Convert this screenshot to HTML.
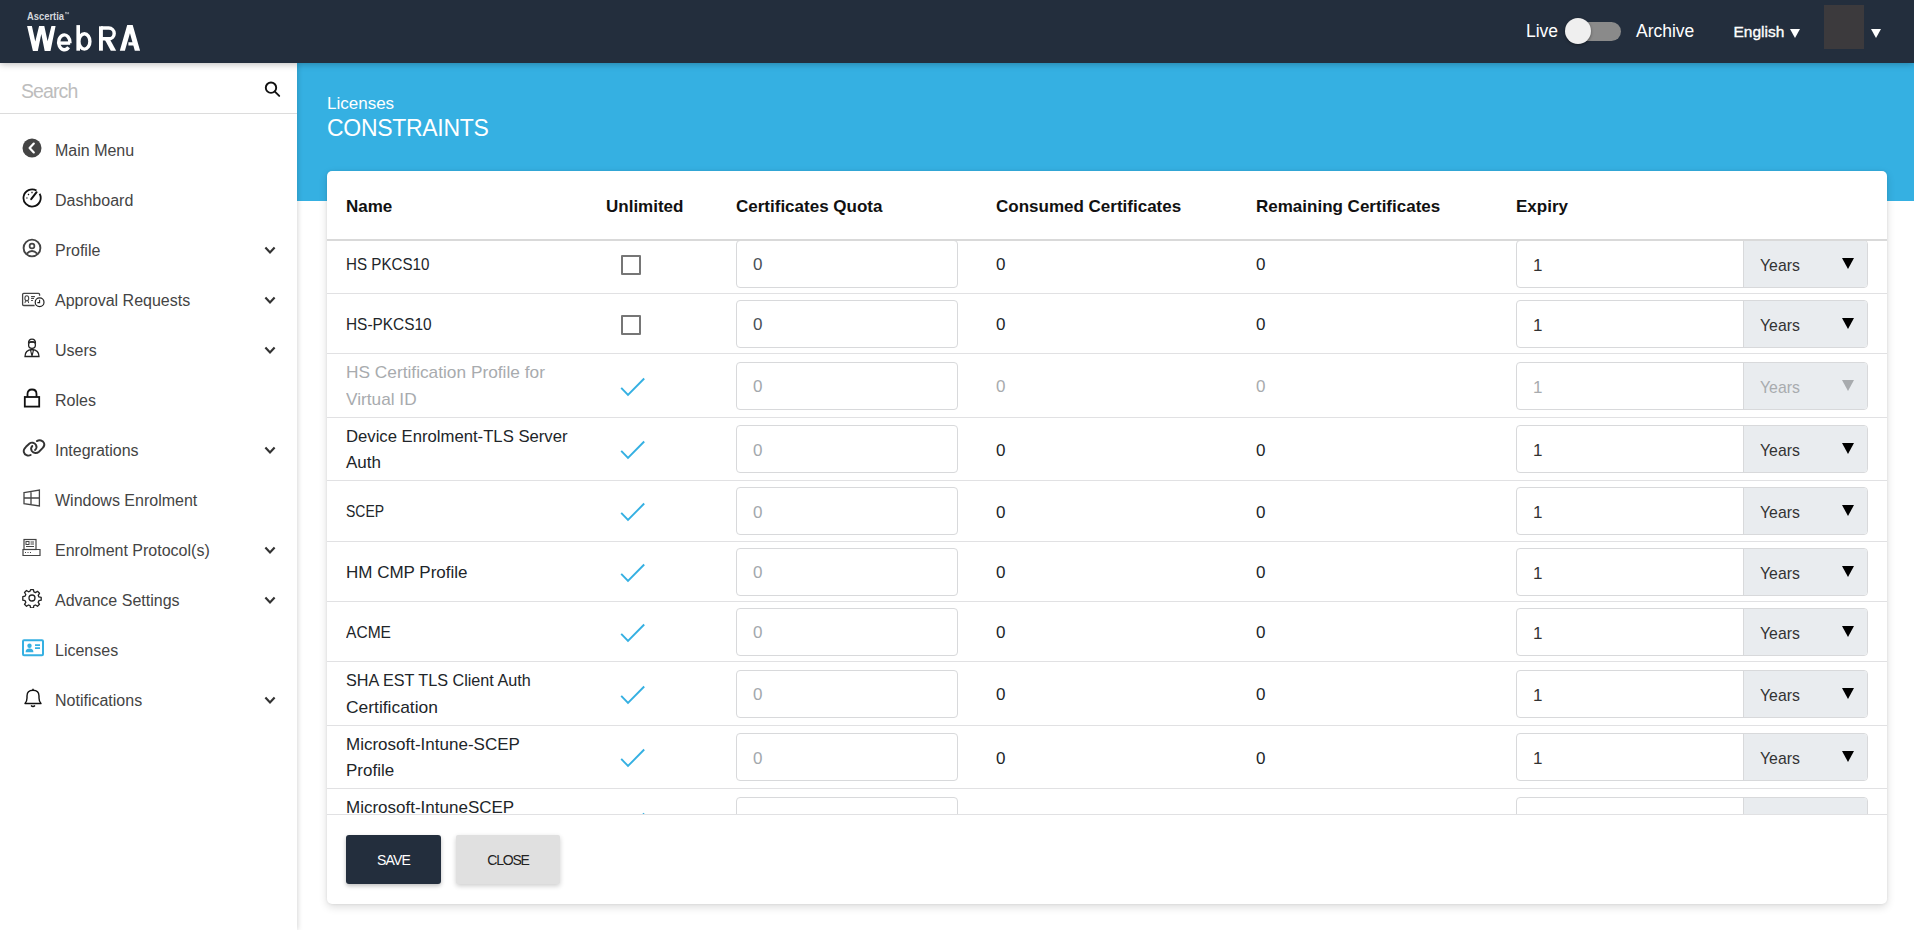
<!DOCTYPE html>
<html><head><meta charset="utf-8">
<style>
*{box-sizing:border-box;margin:0;padding:0}
html,body{width:1914px;height:930px;overflow:hidden;background:#fff;font-family:"Liberation Sans",sans-serif}
.abs{position:absolute}
#hdr{position:absolute;left:0;top:0;width:1914px;height:63px;background:#232e3d;z-index:5;box-shadow:0 1px 7px rgba(0,0,0,.28)}
#side{position:absolute;left:0;top:63px;width:297px;height:867px;background:#fff;z-index:4;box-shadow:0 0 0 0 #fff,1px 0 5px rgba(0,0,0,.16)}
#banner{position:absolute;left:297px;top:63px;width:1617px;height:138px;background:#35b0e2}
.mi{position:absolute;left:0;width:297px;height:50px;font-size:16px;color:#444}
.mi .t{position:absolute;left:55px;top:0;line-height:20px}
.mi svg{position:absolute}
.chev{position:absolute;left:263px}
#card{position:absolute;left:327px;top:171px;width:1560px;height:733px;background:#fff;border-radius:5px;box-shadow:0 3px 8px rgba(0,0,0,.14),0 0 3px rgba(0,0,0,.08)}
.th{position:absolute;top:197px;font-size:17px;font-weight:bold;color:#111;line-height:20px}
.row{position:absolute;left:327px;width:1560px;border-bottom:1px solid #e1e1e3}
.nm{position:absolute;left:19px;font-size:17px;color:#212529;line-height:26.8px}
.inp{position:absolute;left:409px;width:222px;height:48px;border:1px solid #d8d9db;border-radius:4px;background:#fff}
.inp span{position:absolute;left:16px;top:14.5px;font-size:17px;color:#9aa0a6;line-height:20px}
.val{position:absolute;font-size:17px;color:#212529;line-height:20px}
.exp{position:absolute;left:1189px;width:352px;height:48px;border:1px solid #d8d9db;border-radius:4px;background:#fff;overflow:hidden}
.exp .one{position:absolute;left:16px;top:15px;font-size:17px;color:#333;line-height:20px}
.exp .sel{position:absolute;left:226px;top:0;width:126px;height:46px;background:#e9ecef;border-left:1px solid #d8d9db}
.exp .sel span{position:absolute;left:16px;top:15px;font-size:17px;color:#333;line-height:20px;transform:scaleX(0.93);transform-origin:0 0}
.exp .sel i{position:absolute;left:98px;top:17px;width:0;height:0;border-left:6px solid transparent;border-right:6px solid transparent;border-top:11px solid #000}
.cb{position:absolute;left:294px;width:20px;height:20px;border:2px solid #767676;border-radius:1px}
.ck{position:absolute;left:293px}
.dis .nm,.dis .val,.dis .exp .one,.dis .exp .sel span{color:#a8abae}
.dis .exp .sel i{border-top-color:#a8abae}
</style></head><body>

<div id="hdr">
  <svg class="abs" style="left:0;top:0" width="160" height="63" viewBox="0 0 160 63">
  <text x="27" y="19.6" font-family="Liberation Sans" font-weight="bold" font-size="10.2" fill="#d4d7dc" textLength="37" lengthAdjust="spacingAndGlyphs">Ascertia</text>
  <path d="M65 12.4h1.6M65.8 12.4v1.8M67 14.2v-1.8l.8 1 .8-1v1.8" stroke="#ddd" stroke-width="0.6" fill="none"/>
  <g fill="#fff">
    <path d="M27.1 26 L31.9 26 L35.3 41.6 L39.1 26 L44.3 26 L47.6 41.3 L51.4 26 L55.6 26 L50.5 50.9 L44.7 50.9 L41.3 33.9 L37.8 50.9 L32.9 50.9 Z"/>
    <rect x="76.4" y="25.1" width="3.6" height="25.6"/>
    <polygon points="99,26.3 102.9,26.3 102.9,50.7 99,50.7"/>
    <polygon points="104.3,38.8 109.6,38.8 116.2,50.7 110.8,50.7"/>
    <polygon points="119.8,50.7 127.2,25.1 132.7,25.1 140.1,50.7 134.8,50.7 129.95,33.2 124.9,50.7"/>
    <polygon points="128.4,42.3 133.5,42.3 134.3,45.5 128.4,45.5"/>
  </g>
  <g fill="none" stroke="#fff" stroke-width="3.4">
    <path d="M58.4 43.1 H70.2"/>
    <path d="M70 43.1 A5.7 7.45 0 1 0 68.6 47.3"/>
    <ellipse cx="84.4" cy="41.4" rx="5.5" ry="7.7"/>
    <path d="M101 28 H108.8 A5.4 5.4 0 0 1 108.8 38.8 H101"/>
  </g>
</svg>
  <div class="abs" style="left:1526px;top:21px;font-size:17.5px;color:#fff;line-height:20px">Live</div>
  <div class="abs" style="left:1566px;top:22px;width:55px;height:19px;border-radius:10px;background:#8a8a8a"></div>
  <div class="abs" style="left:1565px;top:18px;width:26px;height:26px;border-radius:50%;background:#efefef;box-shadow:0 1px 3px rgba(0,0,0,.4)"></div>
  <div class="abs" style="left:1636px;top:21px;font-size:17.5px;color:#fff;line-height:20px">Archive</div>
  <div class="abs" style="left:1733.5px;top:21.5px;font-size:15.5px;color:#fff;line-height:20px;-webkit-text-stroke:0.35px #fff">English</div>
  <div class="abs" style="left:1790px;top:29px;width:0;height:0;border-left:5px solid transparent;border-right:5px solid transparent;border-top:9px solid #fff"></div>
  <div class="abs" style="left:1824px;top:5px;width:40px;height:44px;background:#3c3a3d"></div>
  <div class="abs" style="left:1871px;top:29px;width:0;height:0;border-left:5px solid transparent;border-right:5px solid transparent;border-top:9px solid #fff"></div>
</div>

<div id="side">
  <div class="abs" style="left:21px;top:18px;font-size:19.5px;color:#bdbdbd;line-height:20px;letter-spacing:-0.9px">Search</div>
  <svg class="abs" style="left:263px;top:18px" width="20" height="20" viewBox="0 0 20 20"><circle cx="8" cy="6.7" r="5.2" fill="none" stroke="#111" stroke-width="1.9"/><line x1="11.9" y1="10.6" x2="16.2" y2="14.9" stroke="#111" stroke-width="1.9" stroke-linecap="round"/></svg>
  <div class="abs" style="left:0;top:50px;width:297px;height:1px;background:#dcdcdc"></div>
<div class="mi" style="top:63px"><div class="ib" style="position:absolute;left:22px;top:12px;width:24px;height:20px"><svg width="20" height="20" viewBox="0 0 20 20"><circle cx="10" cy="10" r="9.5" fill="#444"/><path d="M11.8 5.6 L7.6 10 L11.8 14.4" fill="none" stroke="#fff" stroke-width="2.2" stroke-linecap="round" stroke-linejoin="round"/></svg></div><span class="t" style="top:15px">Main Menu</span></div>
<div class="mi" style="top:113px"><div class="ib" style="position:absolute;left:22px;top:12px;width:24px;height:20px"><svg width="20" height="20" viewBox="0 0 20 20"><path d="M14.5 2.6 A8.6 8.6 0 1 0 17.6 5.8" fill="none" stroke="#111" stroke-width="1.8"/><path d="M9.2 11.2 L14.6 4.2" stroke="#111" stroke-width="2" stroke-linecap="round"/><path d="M4.2 10 h1.4 M6 6 l1 1 M10 3.8 v1.4" stroke="#111" stroke-width="1.2"/></svg></div><span class="t" style="top:15px">Dashboard</span></div>
<div class="mi" style="top:163px"><div class="ib" style="position:absolute;left:22px;top:12px;width:24px;height:20px"><svg width="20" height="20" viewBox="0 0 20 20"><circle cx="10" cy="10" r="8.4" fill="none" stroke="#444" stroke-width="1.9"/><circle cx="10" cy="8" r="2.4" fill="none" stroke="#444" stroke-width="1.7"/><path d="M4.8 15.6 Q10 10.4 15.2 15.6" fill="none" stroke="#444" stroke-width="1.9"/></svg></div><span class="t" style="top:15px">Profile</span><svg class="chev" style="top:19.8px;left:263.5px" width="13" height="9" viewBox="0 0 13 9"><path d="M1.4 1.6 L6 6.4 L10.6 1.6" fill="none" stroke="#333" stroke-width="2.2"/></svg></div>
<div class="mi" style="top:213px"><div class="ib" style="position:absolute;left:22px;top:12px;width:24px;height:20px"><svg width="26" height="22" viewBox="0 -1.1 26 22" style="overflow:visible"><path d="M17.6 6.6 V5.3 Q17.6 4.2 16.5 4.2 H1.7 Q0.6 4.2 0.6 5.3 V15.3 Q0.6 16.4 1.7 16.4 H12.6" fill="none" stroke="#444" stroke-width="1.3"/><ellipse cx="4.8" cy="9.2" rx="1.9" ry="2.6" fill="none" stroke="#444" stroke-width="1.1"/><path d="M3.6 11.5 L2.9 14 M6 11.5 L6.7 14" stroke="#444" stroke-width="1"/><path d="M9.1 7.5h3.8 M9.1 9.4h2.9 M9.1 11.4h1.8" stroke="#444" stroke-width="1.1"/><circle cx="17.6" cy="13.2" r="4.4" fill="#fff" stroke="#222" stroke-width="1.2"/><path d="M17.6 10.7v2.8h-2.2" fill="none" stroke="#222" stroke-width="1.1"/></svg></div><span class="t" style="top:15px">Approval Requests</span><svg class="chev" style="top:19.8px;left:263.5px" width="13" height="9" viewBox="0 0 13 9"><path d="M1.4 1.6 L6 6.4 L10.6 1.6" fill="none" stroke="#333" stroke-width="2.2"/></svg></div>
<div class="mi" style="top:263px"><div class="ib" style="position:absolute;left:22px;top:12px;width:24px;height:20px"><svg width="20" height="20" viewBox="0 0 20 20"><path d="M6.5 5.5 Q6.5 1.2 10 1.2 Q13.5 1.2 13.5 5.5" fill="none" stroke="#222" stroke-width="1.3"/><path d="M6.2 4.2 h7.6" stroke="#222" stroke-width="1.3"/><circle cx="10" cy="7" r="3.4" fill="none" stroke="#222" stroke-width="1.3"/><path d="M3 18.5 Q3 12 10 11.5 Q17 12 17 18.5 Z" fill="none" stroke="#222" stroke-width="1.3"/><path d="M8.5 12 L10 18 L11.5 12" fill="none" stroke="#222" stroke-width="1.1"/></svg></div><span class="t" style="top:15px">Users</span><svg class="chev" style="top:19.8px;left:263.5px" width="13" height="9" viewBox="0 0 13 9"><path d="M1.4 1.6 L6 6.4 L10.6 1.6" fill="none" stroke="#333" stroke-width="2.2"/></svg></div>
<div class="mi" style="top:313px"><div class="ib" style="position:absolute;left:22px;top:12px;width:24px;height:20px"><svg width="20" height="20" viewBox="0 0 20 20"><path d="M5.5 9 V6 Q5.5 1.5 10 1.5 Q14.5 1.5 14.5 6 V9" fill="none" stroke="#111" stroke-width="1.8"/><rect x="2.8" y="9" width="14.4" height="9.6" fill="none" stroke="#111" stroke-width="1.8"/></svg></div><span class="t" style="top:15px">Roles</span></div>
<div class="mi" style="top:363px"><div class="ib" style="position:absolute;left:22px;top:12px;width:24px;height:20px"><svg width="24" height="20" viewBox="0 -1.5 24 20" style="overflow:visible"><path d="M8.7 15.5 C6 17 2.5 15.5 1.8 12.5 C1.3 10.5 2.5 8.8 4 7.3 L7.5 4 C9.5 2.5 12.5 3 14 5.5 C15 7.5 14.2 9.5 13 10.5" fill="none" stroke="#333" stroke-width="1.9" stroke-linecap="round"/><path d="M14.9 1.6 C17.5 0 21 1 22 3.5 C22.8 5.5 22 7.2 20.8 8.4 L17 12.2 C15 14 11.5 14 9.8 11.5 C8.8 9.8 9 7.8 10.3 6.5" fill="none" stroke="#333" stroke-width="1.9" stroke-linecap="round"/></svg></div><span class="t" style="top:15px">Integrations</span><svg class="chev" style="top:19.8px;left:263.5px" width="13" height="9" viewBox="0 0 13 9"><path d="M1.4 1.6 L6 6.4 L10.6 1.6" fill="none" stroke="#333" stroke-width="2.2"/></svg></div>
<div class="mi" style="top:413px"><div class="ib" style="position:absolute;left:22px;top:12px;width:24px;height:20px"><svg width="20" height="20" viewBox="0 0 20 20"><path d="M2 4.6 L17.4 2 V18 L2 15.6 Z M2 10 H17.4 M9 3.4 V16.8" fill="none" stroke="#444" stroke-width="1.3"/></svg></div><span class="t" style="top:15px">Windows Enrolment</span></div>
<div class="mi" style="top:463px"><div class="ib" style="position:absolute;left:22px;top:12px;width:24px;height:20px"><svg width="20" height="20" viewBox="0 0 20 20"><rect x="2" y="1.5" width="12" height="10" fill="none" stroke="#444" stroke-width="1.2"/><rect x="4" y="3.5" width="3" height="3" fill="none" stroke="#444" stroke-width="1"/><path d="M8.5 4h3.5 M8.5 6h3.5 M4 8.5h8" stroke="#444" stroke-width="1"/><path d="M1 11.5 H18 V17.5 H1 Z" fill="none" stroke="#444" stroke-width="1.2"/><path d="M3 14.5h1 M5.5 14.5h1 M8 14.5h1" stroke="#444" stroke-width="1.2"/></svg></div><span class="t" style="top:15px">Enrolment Protocol(s)</span><svg class="chev" style="top:19.8px;left:263.5px" width="13" height="9" viewBox="0 0 13 9"><path d="M1.4 1.6 L6 6.4 L10.6 1.6" fill="none" stroke="#333" stroke-width="2.2"/></svg></div>
<div class="mi" style="top:513px"><div class="ib" style="position:absolute;left:22px;top:12px;width:24px;height:20px"><svg width="20" height="20" viewBox="0 0 20 20"><path d="M8.6 1.6h2.8l.5 2.3 1.6.7 2-1.3 2 2-1.3 2 .7 1.6 2.3.5v2.8l-2.3.5-.7 1.6 1.3 2-2 2-2-1.3-1.6.7-.5 2.3H8.6l-.5-2.3-1.6-.7-2 1.3-2-2 1.3-2-.7-1.6-2.3-.5V8.6l2.3-.5.7-1.6-1.3-2 2-2 2 1.3 1.6-.7z" fill="none" stroke="#222" stroke-width="1.3" stroke-linejoin="round"/><circle cx="10" cy="10" r="3" fill="none" stroke="#222" stroke-width="1.3"/></svg></div><span class="t" style="top:15px">Advance Settings</span><svg class="chev" style="top:19.8px;left:263.5px" width="13" height="9" viewBox="0 0 13 9"><path d="M1.4 1.6 L6 6.4 L10.6 1.6" fill="none" stroke="#333" stroke-width="2.2"/></svg></div>
<div class="mi" style="top:563px" style="color:#35b0e2"><div class="ib" style="position:absolute;left:22px;top:12px;width:24px;height:20px"><svg width="22" height="18" viewBox="0 -1.2 22 18" style="overflow:visible"><rect x="1" y="1" width="20" height="15" rx="1" fill="none" stroke="#35b0e2" stroke-width="2"/><circle cx="7.5" cy="6.5" r="2.2" fill="#35b0e2"/><path d="M3.6 13 Q3.6 9.4 7.5 9.4 Q11.4 9.4 11.4 13 Z" fill="#35b0e2"/><path d="M13 6h5 M13 9h5" stroke="#35b0e2" stroke-width="1.8"/></svg></div><span class="t" style="top:15px">Licenses</span></div>
<div class="mi" style="top:613px"><div class="ib" style="position:absolute;left:22px;top:12px;width:24px;height:20px"><svg width="22" height="20" viewBox="0 0 22 20"><path d="M3 15.5 Q5 13.5 5 10 V8 Q5 2.2 11 2.2 Q17 2.2 17 8 V10 Q17 13.5 19 15.5 Z" fill="none" stroke="#111" stroke-width="1.4" stroke-linejoin="round"/><path d="M9 17.5 Q11 19.5 13 17.5" fill="none" stroke="#111" stroke-width="1.4"/><path d="M11 0.8v1.4" stroke="#111" stroke-width="1.4"/></svg></div><span class="t" style="top:15px">Notifications</span><svg class="chev" style="top:19.8px;left:263.5px" width="13" height="9" viewBox="0 0 13 9"><path d="M1.4 1.6 L6 6.4 L10.6 1.6" fill="none" stroke="#333" stroke-width="2.2"/></svg></div>
</div>

<div id="banner">
  <div class="abs" style="left:30px;top:31px;font-size:17px;color:#fff;line-height:20px">Licenses</div>
  <div class="abs" style="left:30px;top:52px;font-size:23px;color:#fff;line-height:26px;letter-spacing:-0.3px">CONSTRAINTS</div>
</div>

<div id="card"></div>
<div class="th" style="left:346px">Name</div>
<div class="th" style="left:606px">Unlimited</div>
<div class="th" style="left:736px">Certificates Quota</div>
<div class="th" style="left:996px">Consumed Certificates</div>
<div class="th" style="left:1256px">Remaining Certificates</div>
<div class="th" style="left:1516px">Expiry</div>
<div class="abs" style="left:327px;top:239px;width:1560px;height:2px;background:#d9d9d9;z-index:2"></div>

<div id="rows" class="abs" style="left:0;top:241px;width:1914px;height:573px;overflow:hidden">
<div class="row" style="top:-7px;height:60px"><div class="nm" style="top:17.6px"><span style="display:inline-block;transform:scaleX(0.892);transform-origin:0 0">HS PKCS10</span></div><div class="cb" style="top:20.5px"></div><div class="inp" style="top:5.5px"><span style="color:#495057">0</span></div><div class="val" style="left:669px;top:21.0px">0</div><div class="val" style="left:929px;top:21.0px">0</div><div class="exp" style="top:5.5px"><span class="one">1</span><div class="sel"><span>Years</span><i></i></div></div></div>
<div class="row" style="top:53px;height:60px"><div class="nm" style="top:17.6px"><span style="display:inline-block;transform:scaleX(0.906);transform-origin:0 0">HS-PKCS10</span></div><div class="cb" style="top:20.5px"></div><div class="inp" style="top:5.5px"><span style="color:#495057">0</span></div><div class="val" style="left:669px;top:21.0px">0</div><div class="val" style="left:929px;top:21.0px">0</div><div class="exp" style="top:5.5px"><span class="one">1</span><div class="sel"><span>Years</span><i></i></div></div></div>
<div class="row dis" style="top:113px;height:64px"><div class="nm" style="top:6.2px"><span style="display:inline-block;transform:scaleX(1.017);transform-origin:0 0">HS Certification Profile for</span><br><span style="display:inline-block;transform:scaleX(1.014);transform-origin:0 0">Virtual ID</span></div><div class="ck" style="top:22.5px"><svg width="26" height="20" viewBox="0 0 26 20"><path d="M1.2 10.8 L8 18 L24.2 1.5" fill="none" stroke="#35b0e2" stroke-width="1.9"/></svg></div><div class="inp" style="top:7.5px"><span style="color:#a3a8ad">0</span></div><div class="val" style="left:669px;top:23.0px">0</div><div class="val" style="left:929px;top:23.0px">0</div><div class="exp" style="top:7.5px"><span class="one">1</span><div class="sel"><span>Years</span><i></i></div></div></div>
<div class="row" style="top:177px;height:63px"><div class="nm" style="top:5.7px"><span style="display:inline-block;transform:scaleX(0.981);transform-origin:0 0">Device Enrolment-TLS Server</span><br>Auth</div><div class="ck" style="top:22.0px"><svg width="26" height="20" viewBox="0 0 26 20"><path d="M1.2 10.8 L8 18 L24.2 1.5" fill="none" stroke="#35b0e2" stroke-width="1.9"/></svg></div><div class="inp" style="top:7.0px"><span style="color:#a3a8ad">0</span></div><div class="val" style="left:669px;top:22.5px">0</div><div class="val" style="left:929px;top:22.5px">0</div><div class="exp" style="top:7.0px"><span class="one">1</span><div class="sel"><span>Years</span><i></i></div></div></div>
<div class="row" style="top:240px;height:61px"><div class="nm" style="top:18.1px"><span style="display:inline-block;transform:scaleX(0.821);transform-origin:0 0">SCEP</span></div><div class="ck" style="top:21.0px"><svg width="26" height="20" viewBox="0 0 26 20"><path d="M1.2 10.8 L8 18 L24.2 1.5" fill="none" stroke="#35b0e2" stroke-width="1.9"/></svg></div><div class="inp" style="top:6.0px"><span style="color:#a3a8ad">0</span></div><div class="val" style="left:669px;top:21.5px">0</div><div class="val" style="left:929px;top:21.5px">0</div><div class="exp" style="top:6.0px"><span class="one">1</span><div class="sel"><span>Years</span><i></i></div></div></div>
<div class="row" style="top:301px;height:60px"><div class="nm" style="top:17.6px">HM CMP Profile</div><div class="ck" style="top:20.5px"><svg width="26" height="20" viewBox="0 0 26 20"><path d="M1.2 10.8 L8 18 L24.2 1.5" fill="none" stroke="#35b0e2" stroke-width="1.9"/></svg></div><div class="inp" style="top:5.5px"><span style="color:#a3a8ad">0</span></div><div class="val" style="left:669px;top:21.0px">0</div><div class="val" style="left:929px;top:21.0px">0</div><div class="exp" style="top:5.5px"><span class="one">1</span><div class="sel"><span>Years</span><i></i></div></div></div>
<div class="row" style="top:361px;height:60px"><div class="nm" style="top:17.6px"><span style="display:inline-block;transform:scaleX(0.916);transform-origin:0 0">ACME</span></div><div class="ck" style="top:20.5px"><svg width="26" height="20" viewBox="0 0 26 20"><path d="M1.2 10.8 L8 18 L24.2 1.5" fill="none" stroke="#35b0e2" stroke-width="1.9"/></svg></div><div class="inp" style="top:5.5px"><span style="color:#a3a8ad">0</span></div><div class="val" style="left:669px;top:21.0px">0</div><div class="val" style="left:929px;top:21.0px">0</div><div class="exp" style="top:5.5px"><span class="one">1</span><div class="sel"><span>Years</span><i></i></div></div></div>
<div class="row" style="top:421px;height:64px"><div class="nm" style="top:6.2px"><span style="display:inline-block;transform:scaleX(0.952);transform-origin:0 0">SHA EST TLS Client Auth</span><br><span style="display:inline-block;transform:scaleX(1.024);transform-origin:0 0">Certification</span></div><div class="ck" style="top:22.5px"><svg width="26" height="20" viewBox="0 0 26 20"><path d="M1.2 10.8 L8 18 L24.2 1.5" fill="none" stroke="#35b0e2" stroke-width="1.9"/></svg></div><div class="inp" style="top:7.5px"><span style="color:#a3a8ad">0</span></div><div class="val" style="left:669px;top:23.0px">0</div><div class="val" style="left:929px;top:23.0px">0</div><div class="exp" style="top:7.5px"><span class="one">1</span><div class="sel"><span>Years</span><i></i></div></div></div>
<div class="row" style="top:485px;height:63px"><div class="nm" style="top:5.7px">Microsoft-Intune-SCEP<br>Profile</div><div class="ck" style="top:22.0px"><svg width="26" height="20" viewBox="0 0 26 20"><path d="M1.2 10.8 L8 18 L24.2 1.5" fill="none" stroke="#35b0e2" stroke-width="1.9"/></svg></div><div class="inp" style="top:7.0px"><span style="color:#a3a8ad">0</span></div><div class="val" style="left:669px;top:22.5px">0</div><div class="val" style="left:929px;top:22.5px">0</div><div class="exp" style="top:7.0px"><span class="one">1</span><div class="sel"><span>Years</span><i></i></div></div></div>
<div class="row" style="top:548px;height:64px"><div class="nm" style="top:6.2px">Microsoft-IntuneSCEP<br>Profile</div><div class="ck" style="top:22.5px"><svg width="26" height="20" viewBox="0 0 26 20"><path d="M1.2 10.8 L8 18 L24.2 1.5" fill="none" stroke="#35b0e2" stroke-width="1.9"/></svg></div><div class="inp" style="top:7.5px"><span style="color:#a3a8ad">0</span></div><div class="val" style="left:669px;top:23.0px">0</div><div class="val" style="left:929px;top:23.0px">0</div><div class="exp" style="top:7.5px"><span class="one">1</span><div class="sel"><span>Years</span><i></i></div></div></div>
</div>
<div class="abs" style="left:327px;top:814px;width:1560px;height:1px;background:#e1e1e3"></div>

<div class="abs" style="left:346px;top:835px;width:95px;height:49px;background:#232e3d;border-radius:3px;box-shadow:0 2px 4px rgba(0,0,0,.25);color:#fff;font-size:14px;letter-spacing:-0.8px;line-height:50px;text-align:center">SAVE</div>
<div class="abs" style="left:456px;top:835px;width:104px;height:49px;background:#e0e0e0;border-radius:2px;box-shadow:0 2px 5px rgba(0,0,0,.2);color:#222;font-size:14px;letter-spacing:-1.2px;line-height:50px;text-align:center">CLOSE</div>

</body></html>
